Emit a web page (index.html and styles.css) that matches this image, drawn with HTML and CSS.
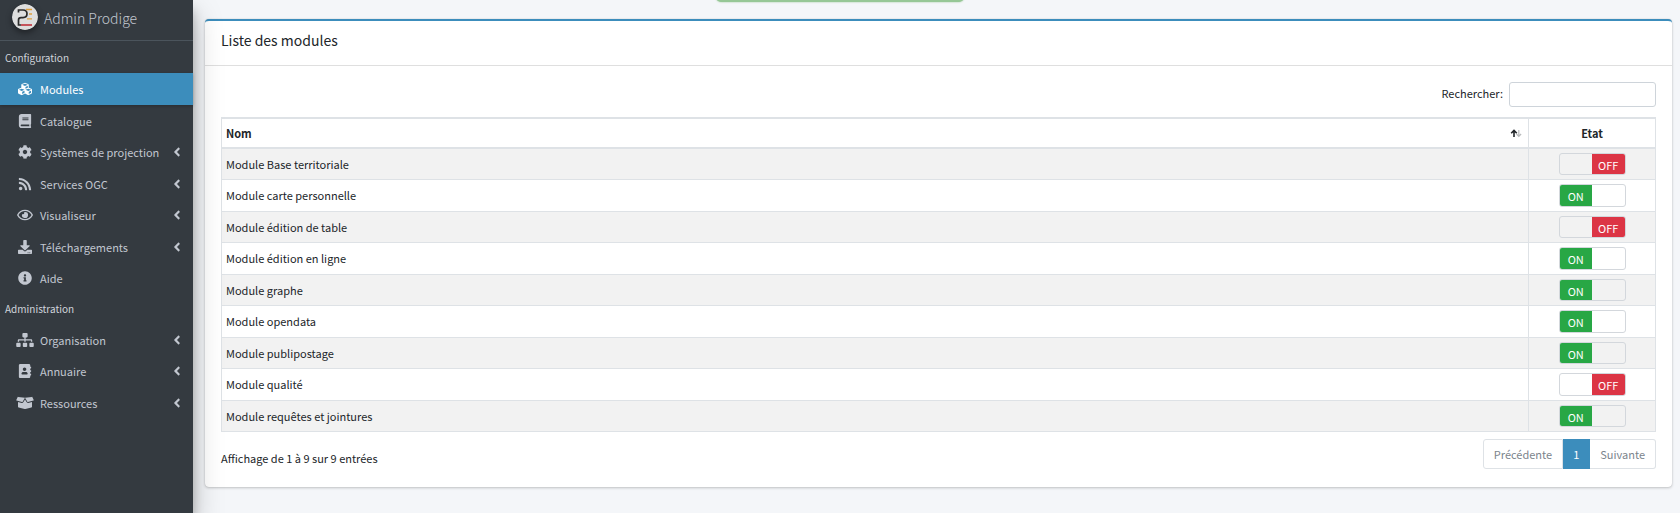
FILE: index.html
```html
<!DOCTYPE html>
<html lang="fr">
<head>
    <meta charset="UTF-8">
    <meta name="viewport" content="width=device-width, initial-scale=1.0">
    <title>Admin Prodige - Modules</title>
    <link rel="stylesheet" href="styles.css">
</head>
<body>
    <div class="toast" role="status"></div>

    <div class="wrapper">
        <aside class="sidebar">
            <a href="#" class="brand">
                <svg class="brand-logo" viewBox="0 0 26 26">
                    <circle cx="13" cy="13" r="13" fill="#dedede"/>
                    <path d="M6.500 8.500V6H11q4 0 4 3.800t-4 3.800H9q-2.500 0-2.500 2.500V21H9" fill="none" stroke="#2b2b2b" stroke-width="1.700"/>
                    <path d="M14 5.500h6M17 10h3M15 14.800h5" fill="none" stroke="#dda040" stroke-width="1.300"/>
                    <path d="M9 21h11" stroke="#bd2531" stroke-width="1.500"/>
                </svg>
                <span class="brand-text">Admin Prodige</span>
            </a>

            <nav class="menu">
                <h2 class="menu-header">Configuration</h2>
                <a href="#" class="menu-link active">
                    <svg class="icon" viewBox="0 0 512 512"><path d="M488.600 250.200L392 214V105.500c0-15-9.300-28.400-23.400-33.700l-100-37.500c-8.100-3.100-17.100-3.100-25.300 0l-100 37.500c-14.100 5.300-23.400 18.700-23.400 33.700V214l-96.600 36.200C9.300 255.500 0 268.900 0 283.900V394c0 13.600 7.700 26.100 19.900 32.200l100 50c10.100 5.100 22.100 5.100 32.200 0l103.900-52 103.900 52c10.100 5.100 22.100 5.100 32.200 0l100-50c12.200-6.100 19.900-18.600 19.900-32.200V283.900c0-15-9.300-28.400-23.400-33.700zM358 214.800l-85 31.900v-68.200l85-37v73.300zM154 104.100l102-38.200 102 38.200v.6l-102 41.400-102-41.400v-.6zm84 291.100l-85 42.500v-79.100l85-38.800v75.400zm0-112l-102 41.400-102-41.400v-.6l102-38.200 102 38.200v.6zm240 112l-85 42.500v-79.100l85-38.800v75.400zm0-112l-102 41.400-102-41.400v-.6l102-38.200 102 38.200v.6z"/></svg>
                    <span>Modules</span>
                </a>
                <a href="#" class="menu-link">
                    <svg class="icon" viewBox="0 0 448 512"><path d="M448 360V24c0-13.300-10.700-24-24-24H96C43 0 0 43 0 96v320c0 53 43 96 96 96h328c13.300 0 24-10.700 24-24v-16c0-7.500-3.500-14.300-8.900-18.700-4.200-15.400-4.200-59.300 0-74.700 5.400-4.300 8.900-11.100 8.900-18.600zM128 134c0-3.300 2.700-6 6-6h212c3.300 0 6 2.700 6 6v20c0 3.300-2.700 6-6 6H134c-3.300 0-6-2.700-6-6v-20zm0 64c0-3.300 2.700-6 6-6h212c3.300 0 6 2.700 6 6v20c0 3.300-2.700 6-6 6H134c-3.300 0-6-2.700-6-6v-20zm253.400 250H96c-17.700 0-32-14.300-32-32 0-17.600 14.400-32 32-32h285.400c-1.900 17.100-1.900 46.900 0 64z"/></svg>
                    <span>Catalogue</span>
                </a>
                <a href="#" class="menu-link">
                    <svg class="icon" viewBox="0 0 512 512"><path d="M487.400 315.700l-42.600-24.600c4.300-23.200 4.300-47 0-70.200l42.600-24.600c4.900-2.800 7.100-8.600 5.500-14-11.100-35.600-30-67.800-54.700-94.600-3.800-4.100-10-5.100-14.800-2.300L380.800 110c-17.900-15.400-38.500-27.300-60.800-35.100V25.800c0-5.600-3.900-10.500-9.400-11.700-36.700-8.200-74.300-7.800-109.200 0-5.500 1.200-9.400 6.100-9.400 11.700V75c-22.200 7.900-42.800 19.800-60.800 35.100L88.700 85.500c-4.900-2.800-11-1.900-14.800 2.300-24.700 26.700-43.600 58.900-54.700 94.600-1.700 5.400.6 11.200 5.500 14L67.300 221c-4.300 23.200-4.300 47 0 70.200l-42.600 24.600c-4.900 2.800-7.100 8.600-5.500 14 11.100 35.600 30 67.800 54.700 94.600 3.800 4.100 10 5.100 14.800 2.300l42.600-24.600c17.900 15.400 38.500 27.300 60.800 35.100v49.200c0 5.600 3.900 10.500 9.400 11.700 36.700 8.200 74.300 7.800 109.200 0 5.500-1.200 9.400-6.100 9.400-11.700v-49.200c22.200-7.900 42.800-19.800 60.800-35.100l42.600 24.600c4.900 2.800 11 1.900 14.800-2.300 24.700-26.700 43.600-58.900 54.700-94.600 1.500-5.500-.7-11.300-5.600-14.100zM256 336c-44.100 0-80-35.900-80-80s35.900-80 80-80 80 35.900 80 80-35.900 80-80 80z"/></svg>
                    <span>Systèmes de projection</span>
                    <svg class="arrow" viewBox="0 0 256 512"><path d="M31.700 239l136-136c9.400-9.400 24.600-9.400 33.900 0l22.600 22.600c9.400 9.400 9.400 24.600 0 33.900L127.900 256l96.400 96.400c9.400 9.400 9.400 24.600 0 33.900L201.700 409c-9.400 9.400-24.600 9.400-33.900 0l-136-136c-9.500-9.400-9.500-24.600-.1-34z"/></svg>
                </a>
                <a href="#" class="menu-link">
                    <svg class="icon" viewBox="0 0 448 512"><path d="M128 416c0 35.300-28.700 64-64 64S0 451.300 0 416s28.700-64 64-64 64 28.700 64 64zm175.700 47.300c-8.400-154.600-132.200-278.600-287-287C7.700 175.800 0 183.100 0 192.300v48.100c0 8.400 6.500 15.500 14.900 16 111.800 7.300 201.500 96.700 208.800 208.800.5 8.400 7.600 14.900 16 14.900h48.100c9.100-.1 16.400-7.800 15.900-16.800zm144.200.3C439.600 229.700 251.500 40.400 16.500 32 7.500 31.700 0 39 0 48v48.100c0 8.600 6.800 15.600 15.500 16 191.200 7.800 344.600 161.300 352.500 352.500.4 8.600 7.400 15.500 16 15.500h48.100c9-.1 16.200-7.500 15.800-16.500z"/></svg>
                    <span>Services OGC</span>
                    <svg class="arrow" viewBox="0 0 256 512"><path d="M31.700 239l136-136c9.400-9.400 24.600-9.400 33.900 0l22.600 22.600c9.400 9.400 9.400 24.600 0 33.900L127.900 256l96.400 96.400c9.400 9.400 9.400 24.600 0 33.900L201.700 409c-9.400 9.400-24.600 9.400-33.900 0l-136-136c-9.500-9.400-9.500-24.600-.1-34z"/></svg>
                </a>
                <a href="#" class="menu-link">
                    <svg class="icon" viewBox="0 0 576 512"><path d="M288 144a110.940 110.940 0 0 0-31.240 5 55.400 55.400 0 0 1 7.240 27 56 56 0 0 1-56 56 55.400 55.400 0 0 1-27-7.240A111.710 111.710 0 1 0 288 144zm284.520 97.400C518.290 135.590 410.930 64 288 64S57.680 135.640 3.480 241.410a32.350 32.350 0 0 0 0 29.190C57.710 376.410 165.070 448 288 448s230.320-71.640 284.520-177.410a32.350 32.350 0 0 0 0-29.190zM288 400c-98.650 0-189.090-55-237.930-144C98.910 167 189.340 112 288 112s189.090 55 237.930 144C477.100 345 386.660 400 288 400z"/></svg>
                    <span>Visualiseur</span>
                    <svg class="arrow" viewBox="0 0 256 512"><path d="M31.700 239l136-136c9.400-9.400 24.600-9.400 33.900 0l22.600 22.600c9.400 9.400 9.400 24.600 0 33.900L127.900 256l96.400 96.400c9.400 9.400 9.400 24.600 0 33.900L201.700 409c-9.400 9.400-24.600 9.400-33.900 0l-136-136c-9.500-9.400-9.500-24.600-.1-34z"/></svg>
                </a>
                <a href="#" class="menu-link">
                    <svg class="icon" viewBox="0 0 512 512"><path d="M216 0h80c13.300 0 24 10.700 24 24v168h87.700c17.800 0 26.700 21.500 14.100 34.100L269.700 378.300c-7.500 7.500-19.800 7.500-27.300 0L90.100 226.100c-12.600-12.600-3.700-34.100 14.100-34.100H192V24c0-13.300 10.700-24 24-24zm296 376v112c0 13.300-10.700 24-24 24H24c-13.300 0-24-10.700-24-24V376c0-13.300 10.700-24 24-24h146.700l49 49c20.100 20.100 52.500 20.100 72.600 0l49-49H488c13.300 0 24 10.700 24 24zm-124 88c0-11-9-20-20-20s-20 9-20 20 9 20 20 20 20-9 20-20zm64 0c0-11-9-20-20-20s-20 9-20 20 9 20 20 20 20-9 20-20z"/></svg>
                    <span>Téléchargements</span>
                    <svg class="arrow" viewBox="0 0 256 512"><path d="M31.700 239l136-136c9.400-9.400 24.600-9.400 33.900 0l22.600 22.600c9.400 9.400 9.400 24.600 0 33.900L127.900 256l96.400 96.400c9.400 9.400 9.400 24.600 0 33.900L201.700 409c-9.400 9.400-24.600 9.400-33.900 0l-136-136c-9.500-9.400-9.500-24.600-.1-34z"/></svg>
                </a>
                <a href="#" class="menu-link">
                    <svg class="icon" viewBox="0 0 512 512"><path d="M256 8C119 8 8 119.100 8 256c0 137 111 248 248 248s248-111 248-248C504 119.100 393 8 256 8zm0 110c23.200 0 42 18.800 42 42s-18.800 42-42 42-42-18.800-42-42 18.800-42 42-42zm56 254c0 6.600-5.400 12-12 12h-88c-6.600 0-12-5.400-12-12v-24c0-6.600 5.400-12 12-12h12v-64h-12c-6.600 0-12-5.400-12-12v-24c0-6.600 5.400-12 12-12h64c6.600 0 12 5.400 12 12v100h12c6.600 0 12 5.400 12 12v24z"/></svg>
                    <span>Aide</span>
                </a>

                <h2 class="menu-header">Administration</h2>
                <a href="#" class="menu-link">
                    <svg class="icon" viewBox="0 0 640 512"><path d="M128 352H32c-17.700 0-32 14.300-32 32v96c0 17.700 14.300 32 32 32h96c17.700 0 32-14.300 32-32v-96c0-17.700-14.300-32-32-32zm-24-80h192v48h48v-48h192v48h48v-57.600c0-21.200-17.200-38.400-38.400-38.400H344v-64h40c17.700 0 32-14.300 32-32V32c0-17.700-14.300-32-32-32H256c-17.700 0-32 14.300-32 32v96c0 17.700 14.300 32 32 32h40v64H94.400C73.200 224 56 241.200 56 262.400V320h48v-48zm264 80h-96c-17.700 0-32 14.300-32 32v96c0 17.700 14.300 32 32 32h96c17.700 0 32-14.300 32-32v-96c0-17.700-14.300-32-32-32zm240 0h-96c-17.700 0-32 14.300-32 32v96c0 17.700 14.300 32 32 32h96c17.700 0 32-14.300 32-32v-96c0-17.700-14.300-32-32-32z"/></svg>
                    <span>Organisation</span>
                    <svg class="arrow" viewBox="0 0 256 512"><path d="M31.700 239l136-136c9.400-9.400 24.600-9.400 33.900 0l22.600 22.600c9.400 9.400 9.400 24.600 0 33.900L127.900 256l96.400 96.400c9.400 9.400 9.400 24.600 0 33.900L201.700 409c-9.400 9.400-24.600 9.400-33.900 0l-136-136c-9.500-9.400-9.500-24.600-.1-34z"/></svg>
                </a>
                <a href="#" class="menu-link">
                    <svg class="icon" viewBox="0 0 448 512"><path d="M436 160c6.600 0 12-5.400 12-12v-40c0-6.600-5.400-12-12-12h-20V48c0-26.500-21.500-48-48-48H48C21.500 0 0 21.500 0 48v416c0 26.500 21.500 48 48 48h320c26.500 0 48-21.500 48-48v-48h20c6.600 0 12-5.400 12-12v-40c0-6.600-5.400-12-12-12h-20v-64h20c6.600 0 12-5.400 12-12v-40c0-6.600-5.400-12-12-12h-20v-64h20zm-228-32c35.300 0 64 28.700 64 64s-28.700 64-64 64-64-28.700-64-64 28.700-64 64-64zm112 236.800c0 10.600-10 19.200-22.400 19.200H118.400C106 384 96 375.400 96 364.800v-19.200c0-31.800 30.100-57.600 67.200-57.600h5c12.300 5.100 25.700 8 39.800 8s27.600-2.900 39.800-8h5c37.100 0 67.200 25.800 67.200 57.600v19.200z"/></svg>
                    <span>Annuaire</span>
                    <svg class="arrow" viewBox="0 0 256 512"><path d="M31.700 239l136-136c9.400-9.400 24.600-9.400 33.900 0l22.600 22.600c9.400 9.400 9.400 24.600 0 33.900L127.900 256l96.400 96.400c9.400 9.400 9.400 24.600 0 33.900L201.700 409c-9.400 9.400-24.600 9.400-33.900 0l-136-136c-9.500-9.400-9.500-24.600-.1-34z"/></svg>
                </a>
                <a href="#" class="menu-link">
                    <svg class="icon" viewBox="0 0 640 512"><path d="M425.700 256c-16.900 0-32.800-9-41.400-23.400L320 126l-64.200 106.600c-8.700 14.500-24.600 23.500-41.500 23.500-4.500 0-9-.6-13.300-1.900L64 215v178c0 14.700 10 27.500 24.200 31l216.200 54.100c10.200 2.500 20.900 2.500 31 0L551.800 424c14.200-3.600 24.200-16.400 24.200-31V215l-137 39.100c-4.300 1.300-8.800 1.900-13.300 1.900zm212.600-112.200L586.800 41c-3.100-6.200-9.800-9.800-16.700-8.900L320 64l91.700 152.100c3.800 6.300 11.400 9.300 18.500 7.300l197.900-56.500c9.900-2.900 14.700-13.900 10.200-23.100zM53.200 41L1.700 143.800c-4.600 9.200.3 20.200 10.100 23l197.900 56.500c7.100 2 14.700-1 18.500-7.300L320 64 69.800 32.100c-6.900-.8-13.500 2.700-16.600 8.900z"/></svg>
                    <span>Ressources</span>
                    <svg class="arrow" viewBox="0 0 256 512"><path d="M31.700 239l136-136c9.400-9.400 24.600-9.400 33.900 0l22.600 22.600c9.400 9.400 9.400 24.600 0 33.900L127.900 256l96.400 96.400c9.400 9.400 9.400 24.600 0 33.900L201.700 409c-9.400 9.400-24.600 9.400-33.900 0l-136-136c-9.500-9.400-9.500-24.600-.1-34z"/></svg>
                </a>
            </nav>
        </aside>

        <main class="content">
            <section class="card">
                <h1 class="card-header">Liste des modules</h1>
                <div class="card-body">
                    <div class="filter">
                        <label for="search">Rechercher:</label>
                        <input type="search" id="search" class="search">
                    </div>

                    <table class="table">
                        <thead>
                            <tr>
                                <th>
                                    <div class="sortable">
                                        <span>Nom</span>
                                        <svg class="sort" viewBox="0 0 12 10">
                                            <path d="M4 9V2.500M1.200 5.300L4 2.500l2.800 2.800" fill="none" stroke="#212529" stroke-width="1.600"/>
                                            <path d="M8.800 2v6.500M6.500 6l2.300 2.300L11.100 6" fill="none" stroke="#b9bbbd" stroke-width="1.200"/>
                                        </svg>
                                    </div>
                                </th>
                                <th class="state">Etat</th>
                            </tr>
                        </thead>
                        <tbody>
                            <tr>
                                <td>Module Base territoriale</td>
                                <td class="state"><label class="toggle"><input type="checkbox" aria-label="Module Base territoriale"><span class="on">ON</span><span class="off">OFF</span></label></td>
                            </tr>
                            <tr>
                                <td>Module carte personnelle</td>
                                <td class="state"><label class="toggle"><input type="checkbox" aria-label="Module carte personnelle" checked><span class="on">ON</span><span class="off">OFF</span></label></td>
                            </tr>
                            <tr>
                                <td>Module édition de table</td>
                                <td class="state"><label class="toggle"><input type="checkbox" aria-label="Module édition de table"><span class="on">ON</span><span class="off">OFF</span></label></td>
                            </tr>
                            <tr>
                                <td>Module édition en ligne</td>
                                <td class="state"><label class="toggle"><input type="checkbox" aria-label="Module édition en ligne" checked><span class="on">ON</span><span class="off">OFF</span></label></td>
                            </tr>
                            <tr>
                                <td>Module graphe</td>
                                <td class="state"><label class="toggle"><input type="checkbox" aria-label="Module graphe" checked><span class="on">ON</span><span class="off">OFF</span></label></td>
                            </tr>
                            <tr>
                                <td>Module opendata</td>
                                <td class="state"><label class="toggle"><input type="checkbox" aria-label="Module opendata" checked><span class="on">ON</span><span class="off">OFF</span></label></td>
                            </tr>
                            <tr>
                                <td>Module publipostage</td>
                                <td class="state"><label class="toggle"><input type="checkbox" aria-label="Module publipostage" checked><span class="on">ON</span><span class="off">OFF</span></label></td>
                            </tr>
                            <tr>
                                <td>Module qualité</td>
                                <td class="state"><label class="toggle"><input type="checkbox" aria-label="Module qualité"><span class="on">ON</span><span class="off">OFF</span></label></td>
                            </tr>
                            <tr>
                                <td>Module requêtes et jointures</td>
                                <td class="state"><label class="toggle"><input type="checkbox" aria-label="Module requêtes et jointures" checked><span class="on">ON</span><span class="off">OFF</span></label></td>
                            </tr>
                        </tbody>
                    </table>

                    <div class="table-footer">
                        <p class="info">Affichage de 1 à 9 sur 9 entrées</p>
                        <nav class="pagination">
                            <a href="#" class="page">Précédente</a>
                            <a href="#" class="page current">1</a>
                            <a href="#" class="page">Suivante</a>
                        </nav>
                    </div>
                </div>
            </section>
        </main>
    </div>
</body>
</html>
```
FILE: styles.css
```css
* {
    box-sizing: border-box;
}

body {
    margin: 0;
    background-color: #f4f6f9;
    color: #212529;
    font-family: "Source Sans Pro", "Noto Sans CJK SC", sans-serif;
    font-size: 11px;
    line-height: 1.5;
}

a {
    text-decoration: none;
}

.wrapper {
    display: flex;
    min-height: 100vh;
}

/* Bottom edge of the notification sliding out of the window */
.toast {
    position: absolute;
    top: -38px;
    left: 50%;
    width: 248px;
    height: 40px;
    margin-left: -124px;
    background-color: #96c796;
    border-radius: 5px;
    box-shadow: 0 0 2px #96c796;
}

/* Sidebar */
.sidebar {
    position: relative;
    z-index: 1;
    flex: 0 0 193px;
    background-color: #343a40;
    box-shadow: 0 14px 28px rgba(0, 0, 0, 0.25), 0 10px 10px rgba(0, 0, 0, 0.22);
}

.brand {
    display: flex;
    align-items: center;
    gap: 6px;
    height: 41px;
    padding: 0 12px 7px;
    border-bottom: 1px solid #4b545c;
    color: #c2c7d0;
    font-size: 14px;
    font-weight: 300;
}

.brand-logo {
    width: 26px;
    height: 26px;
    border-radius: 50%;
    box-shadow: 0 3px 6px rgba(0, 0, 0, 0.4);
}

.brand-text {
    padding-top: 3px;
}

.menu {
    padding-top: 2px;
}

.menu-header {
    margin: 0;
    padding: 5px;
    color: #d0d4db;
    font-size: 10px;
    font-weight: 400;
    line-height: 20px;
}

.menu-link {
    display: flex;
    align-items: center;
    gap: 2px;
    padding: 8px 12px 7px;
    color: #c2c7d0;
}

.menu-link.active {
    background-color: #3c8dbc;
    color: #ffffff;
    box-shadow: 0 1px 3px rgba(0, 0, 0, 0.24);
}

.icon {
    flex: none;
    width: 26px;
    height: 14px;
    fill: currentColor;
}

.arrow {
    flex: none;
    width: 8px;
    height: 14px;
    margin-left: auto;
    fill: currentColor;
}

/* Card */
.content {
    flex: 1;
    min-width: 0;
    padding: 19px 8px 0 12px;
}

.card {
    background-color: #ffffff;
    border-top: 2px solid #3c8dbc;
    border-radius: 4px;
    box-shadow: 0 0 1px rgba(0, 0, 0, 0.2), 0 1px 3px rgba(0, 0, 0, 0.2);
}

.card-header {
    margin: 0;
    padding: 7px 16px 13px;
    border-bottom: 1px solid #dfdfdf;
    font-size: 14px;
    font-weight: 400;
    line-height: 24px;
}

.card-body {
    padding: 16px 16px 18px;
}

.filter {
    display: flex;
    align-items: center;
    justify-content: flex-end;
    gap: 6px;
    margin-bottom: 10px;
}

.filter label {
    padding-bottom: 2px;
}

.search {
    width: 147px;
    height: 25px;
    padding: 4px 8px;
    border: 1px solid #ced4da;
    border-radius: 3px;
    font: inherit;
}

/* Modules table */
.table {
    width: 100%;
    border: 1px solid #dee2e6;
    border-collapse: collapse;
}

.table th,
.table td {
    padding: 4px;
    border: 1px solid #dee2e6;
    text-align: left;
}

.table th {
    padding: 6px 4px 5px;
    border-width: 2px 1px;
    font-weight: 700;
}

.table tbody tr:nth-child(odd) {
    background-color: #f2f2f2;
}

.table .state {
    width: 127px;
    text-align: center;
}

.sortable {
    display: flex;
    align-items: center;
    justify-content: space-between;
}

.sort {
    width: 12px;
    height: 10px;
    margin-right: 2px;
}

/* ON / OFF switch */
.toggle {
    display: flex;
    position: relative;
    width: 67px;
    margin: 0 auto;
    overflow: hidden;
    border: 1px solid #d3d7dc;
    border-radius: 3px;
    color: #ffffff;
    cursor: pointer;
}

.toggle input {
    position: absolute;
    opacity: 0;
}

.toggle span {
    flex: 1 1 0;
    padding: 3px 0 1px;
    visibility: hidden;
}

.toggle .on {
    background-color: #28a745;
}

.toggle .off {
    background-color: #dc3545;
}

.toggle input:checked ~ .on,
.toggle input:not(:checked) ~ .off {
    visibility: visible;
}

/* Table footer */
.table-footer {
    display: flex;
    align-items: center;
    justify-content: space-between;
    margin-top: 7px;
}

.info {
    margin: 0;
    padding-top: 8px;
}

.pagination {
    display: flex;
}

.page {
    padding: 4px 10px;
    border: 1px solid #dee2e6;
    border-left-width: 0;
    color: #7b848c;
    line-height: 20px;
}

.page:first-child {
    border-left-width: 1px;
    border-radius: 3px 0 0 3px;
}

.page:last-child {
    border-radius: 0 3px 3px 0;
}

.page.current {
    background-color: #3c8dbc;
    border-color: #3c8dbc;
    color: #ffffff;
}
```
